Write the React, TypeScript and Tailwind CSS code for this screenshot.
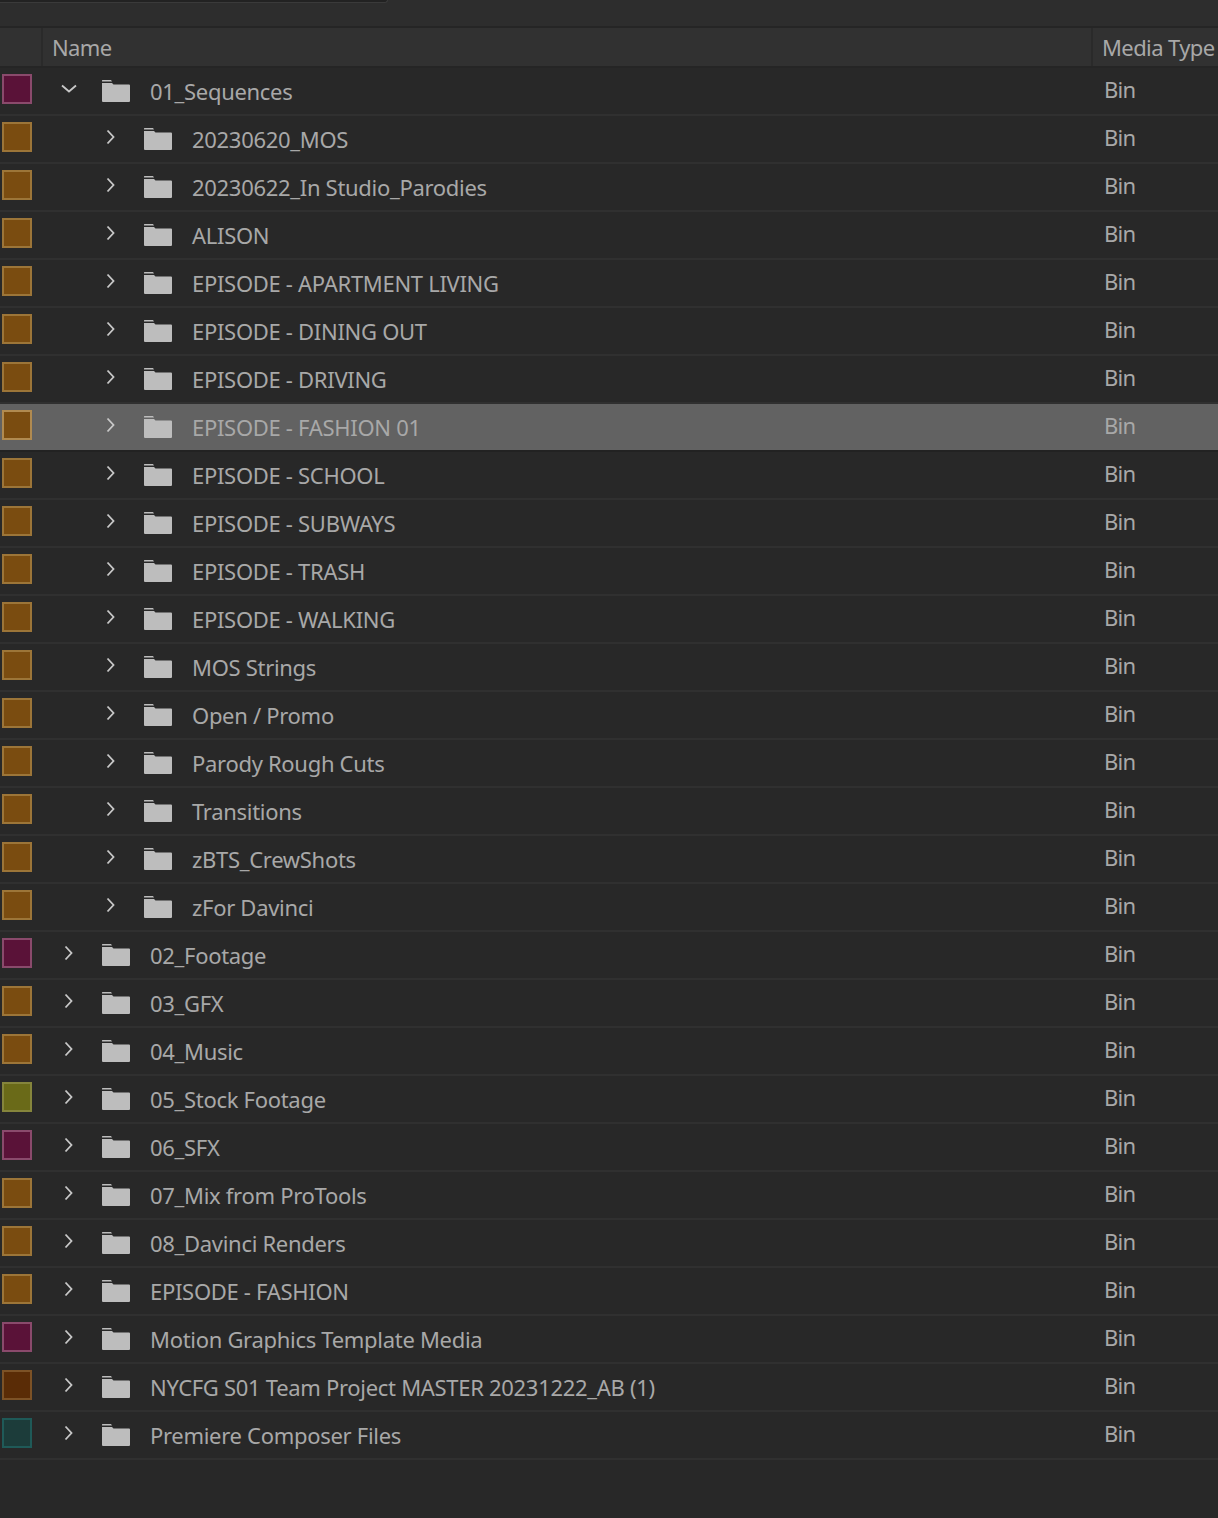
import React from 'react';

type Row = { name: string; color: keyof typeof swatches; depth: 0 | 1; open?: boolean; selected?: boolean };

const swatches = {
  berry: 'bg-[#5a1238] border-[#8a4a6c]',
  orange: 'bg-[#7a4c10] border-[#9c7538]',
  olive: 'bg-[#6a6a18] border-[#85853c]',
  brown: 'bg-[#5a2c06] border-[#7c5226]',
  teal: 'bg-[#1c3c3a] border-[#1f5a58]',
};

const rows: Row[] = [
  { name: '01_Sequences', color: 'berry', depth: 0, open: true },
  { name: '20230620_MOS', color: 'orange', depth: 1 },
  { name: '20230622_In Studio_Parodies', color: 'orange', depth: 1 },
  { name: 'ALISON', color: 'orange', depth: 1 },
  { name: 'EPISODE - APARTMENT LIVING', color: 'orange', depth: 1 },
  { name: 'EPISODE - DINING OUT', color: 'orange', depth: 1 },
  { name: 'EPISODE - DRIVING', color: 'orange', depth: 1 },
  { name: 'EPISODE - FASHION 01', color: 'orange', depth: 1, selected: true },
  { name: 'EPISODE - SCHOOL', color: 'orange', depth: 1 },
  { name: 'EPISODE - SUBWAYS', color: 'orange', depth: 1 },
  { name: 'EPISODE - TRASH', color: 'orange', depth: 1 },
  { name: 'EPISODE - WALKING', color: 'orange', depth: 1 },
  { name: 'MOS Strings', color: 'orange', depth: 1 },
  { name: 'Open / Promo', color: 'orange', depth: 1 },
  { name: 'Parody Rough Cuts', color: 'orange', depth: 1 },
  { name: 'Transitions', color: 'orange', depth: 1 },
  { name: 'zBTS_CrewShots', color: 'orange', depth: 1 },
  { name: 'zFor Davinci', color: 'orange', depth: 1 },
  { name: '02_Footage', color: 'berry', depth: 0 },
  { name: '03_GFX', color: 'orange', depth: 0 },
  { name: '04_Music', color: 'orange', depth: 0 },
  { name: '05_Stock Footage', color: 'olive', depth: 0 },
  { name: '06_SFX', color: 'berry', depth: 0 },
  { name: '07_Mix from ProTools', color: 'orange', depth: 0 },
  { name: '08_Davinci Renders', color: 'orange', depth: 0 },
  { name: 'EPISODE - FASHION', color: 'orange', depth: 0 },
  { name: 'Motion Graphics Template Media', color: 'berry', depth: 0 },
  { name: 'NYCFG S01 Team Project MASTER 20231222_AB (1)', color: 'brown', depth: 0 },
  { name: 'Premiere Composer Files', color: 'teal', depth: 0 },
];

const Folder = () => (
  <svg width="28" height="22" viewBox="0 0 28 22" className="shrink-0">
    <path d="M0 0.5 Q0 0 0.5 0 H9 L10 1.5 H0 Z" fill="#bdbdbd" />
    <path d="M0 3 H10 L11.5 4.5 H27 Q28 4.5 28 5.5 V21 Q28 22 27 22 H1 Q0 22 0 21 Z" fill="#bdbdbd" />
  </svg>
);

const Chevron = ({ open }: { open?: boolean }) => (
  <svg width="16" height="16" viewBox="0 0 16 16" fill="none" stroke="#c8c8c8" strokeWidth="1.8" className="shrink-0">
    {open ? <path d="M1 4.5 L8 10.5 L15 4.5" /> : <path d="M4.5 1.5 L10.5 8 L4.5 14.5" />}
  </svg>
);

export default function App() {
  return (
    <div className="h-[1518px] w-[1218px] overflow-hidden bg-[#282828] font-['Noto_Sans',sans-serif] text-[22px] tracking-[-0.3px] text-[#a8a8a8]">
      <div className="h-[26px] bg-[#2d2d2d]">
        <div className="h-[3px] w-[388px] rounded-br-sm border-r border-b border-[#3a3a3a] bg-[#222222]" />
      </div>

      {/* Header */}
      <div className="flex h-[42px] border-y-2 border-[#252525] bg-[#313131] leading-none tracking-[-0.6px]">
        <div className="w-[43px] border-r-2 border-[#2a2a2a]" />
        <div className="flex w-[1050px] items-center border-r-2 border-[#2a2a2a] pl-[9px]">Name</div>
        <div className="flex flex-1 items-center whitespace-nowrap pl-[9px]">Media Type</div>
      </div>

      {rows.map((row) => (
        <div
          key={row.name}
          className={`flex h-[48px] items-center border-b-2 ${
            row.selected ? 'border-[#222222] bg-[#626262]' : 'border-[#303030]'
          }`}
        >
          <div className="flex w-[1104px] shrink-0 items-center">
            <div className={`mb-[4px] ml-[2px] h-[30px] w-[30px] shrink-0 border-2 ${swatches[row.color]} ${row.selected ? 'border-[#b08a50]' : ''}`} />
            <div className={`flex items-center ${row.depth === 1 ? 'ml-[71px]' : 'ml-[29px]'}`}>
              <div className="mb-[4px]">
                <Chevron open={row.open} />
              </div>
              <div className="ml-[25px]">
                <Folder />
              </div>
              <span className="ml-[20px] whitespace-nowrap leading-none">{row.name}</span>
            </div>
          </div>
          <span className="mb-[4px] leading-none tracking-[-0.7px]">Bin</span>
        </div>
      ))}
    </div>
  );
}
